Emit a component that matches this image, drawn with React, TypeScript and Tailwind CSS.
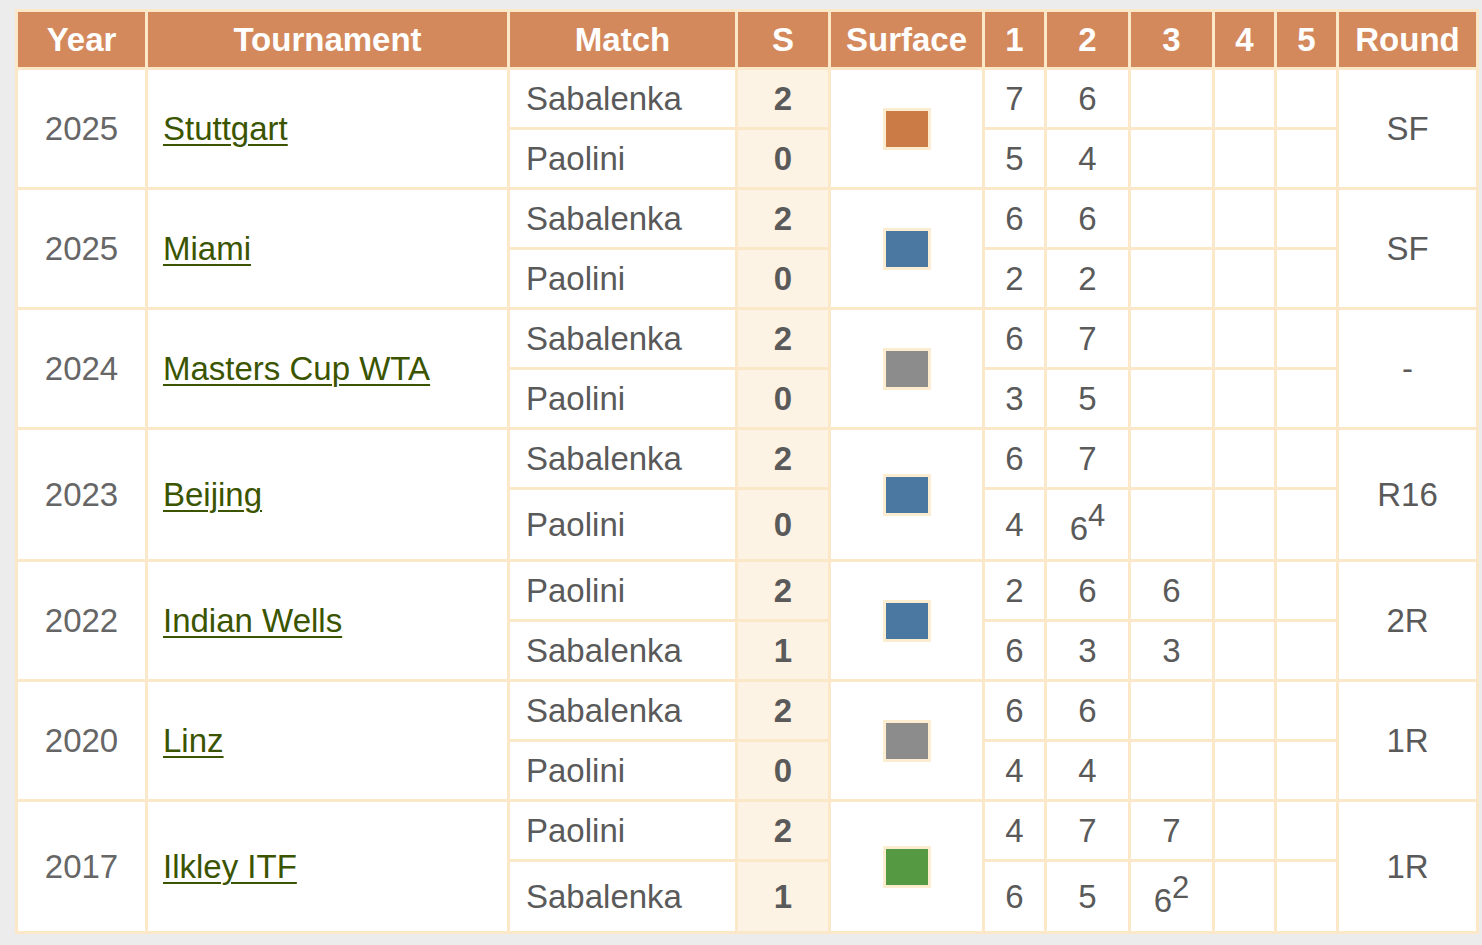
import React from "react";

type Player = { name: string; sets: number; games: (number | [number, number])[] };
type Match = {
  year: number;
  event: string;
  surface: string;
  round: string;
  players: [Player, Player];
  tall?: boolean;
};

const SURFACE: Record<string, string> = {
  clay: "bg-[#cb7b45]",
  hard: "bg-[#4a78a0]",
  indoor: "bg-[#8c8c8c]",
  grass: "bg-[#559a42]",
};

const MATCHES: Match[] = [
  {
    year: 2025, event: "Stuttgart", surface: "clay", round: "SF",
    players: [
      { name: "Sabalenka", sets: 2, games: [7, 6] },
      { name: "Paolini", sets: 0, games: [5, 4] },
    ],
  },
  {
    year: 2025, event: "Miami", surface: "hard", round: "SF",
    players: [
      { name: "Sabalenka", sets: 2, games: [6, 6] },
      { name: "Paolini", sets: 0, games: [2, 2] },
    ],
  },
  {
    year: 2024, event: "Masters Cup WTA", surface: "indoor", round: "-",
    players: [
      { name: "Sabalenka", sets: 2, games: [6, 7] },
      { name: "Paolini", sets: 0, games: [3, 5] },
    ],
  },
  {
    year: 2023, event: "Beijing", surface: "hard", round: "R16", tall: true,
    players: [
      { name: "Sabalenka", sets: 2, games: [6, 7] },
      { name: "Paolini", sets: 0, games: [4, [6, 4]] },
    ],
  },
  {
    year: 2022, event: "Indian Wells", surface: "hard", round: "2R",
    players: [
      { name: "Paolini", sets: 2, games: [2, 6, 6] },
      { name: "Sabalenka", sets: 1, games: [6, 3, 3] },
    ],
  },
  {
    year: 2020, event: "Linz", surface: "indoor", round: "1R",
    players: [
      { name: "Sabalenka", sets: 2, games: [6, 6] },
      { name: "Paolini", sets: 0, games: [4, 4] },
    ],
  },
  {
    year: 2017, event: "Ilkley ITF", surface: "grass", round: "1R", tall: true,
    players: [
      { name: "Paolini", sets: 2, games: [4, 7, 7] },
      { name: "Sabalenka", sets: 1, games: [6, 5, [6, 2]] },
    ],
  },
];

const cell = "border-[3px] border-[#fbe8c9] p-0 align-middle";
const head = "border-[3px] border-[#fbe8c9] bg-[#d4895d] text-white font-bold text-center h-[58px] p-0";

function Games({ g }: { g: number | [number, number] | undefined }) {
  if (g === undefined) return null;
  if (typeof g === "number") return <>{g}</>;
  return (
    <span className="inline-block translate-y-[4px]">
      {g[0]}
      <sup className="text-[31px] top-[-0.45em]">{g[1]}</sup>
    </span>
  );
}

function MatchRows({ m }: { m: Match }) {
  return (
    <>
      {m.players.map((p, i) => (
        <tr key={i} className={i === 1 && m.tall ? "h-[72px]" : "h-[60px]"}>
          {i === 0 && (
            <>
              <td rowSpan={2} className={`${cell} text-center text-[#666]`}>
                {m.year}
              </td>
              <td rowSpan={2} className={`${cell} pl-[15px]`}>
                <a href="#" className="text-[#3b5400] underline underline-offset-[4px] decoration-[2px]">
                  {m.event}
                </a>
              </td>
            </>
          )}
          <td className={`${cell} pl-[16px] text-[#5a5a5a]`}>{p.name}</td>
          <td className={`${cell} bg-[#fdf3e4] text-center font-bold text-[#5a5a5a]`}>{p.sets}</td>
          {i === 0 && (
            <td rowSpan={2} className={`${cell} text-center`}>
              <span
                className={`inline-block align-middle w-[48px] h-[42px] border-[3px] border-[#fcecd0] ${SURFACE[m.surface]}`}
              />
            </td>
          )}
          {[0, 1, 2, 3, 4].map((k) => (
            <td key={k} className={`${cell} text-center text-[#5a5a5a]`}>
              <Games g={p.games[k]} />
            </td>
          ))}
          {i === 0 && (
            <td rowSpan={2} className={`${cell} text-center text-[#5a5a5a]`}>
              {m.round}
            </td>
          )}
        </tr>
      ))}
    </>
  );
}

export default function App() {
  return (
    <div className="min-h-screen bg-[#ececec] pl-[15px] pt-[9px] font-['Liberation_Sans',Arial,sans-serif] text-[33px] leading-none">
      <table className="table-fixed border-collapse w-[1461px] bg-white">
        <colgroup>
          <col className="w-[130px]" />
          <col className="w-[362px]" />
          <col className="w-[228px]" />
          <col className="w-[93px]" />
          <col className="w-[154px]" />
          <col className="w-[62px]" />
          <col className="w-[84px]" />
          <col className="w-[84px]" />
          <col className="w-[62px]" />
          <col className="w-[62px]" />
          <col className="w-[140px]" />
        </colgroup>
        <thead>
          <tr>
            <th className={head}>Year</th>
            <th className={head}>Tournament</th>
            <th className={head}>Match</th>
            <th className={head}>S</th>
            <th className={head}>Surface</th>
            <th className={head}>1</th>
            <th className={head}>2</th>
            <th className={head}>3</th>
            <th className={head}>4</th>
            <th className={head}>5</th>
            <th className={head}>Round</th>
          </tr>
        </thead>
        <tbody>
          {MATCHES.map((m, i) => (
            <MatchRows key={i} m={m} />
          ))}
        </tbody>
      </table>
    </div>
  );
}
